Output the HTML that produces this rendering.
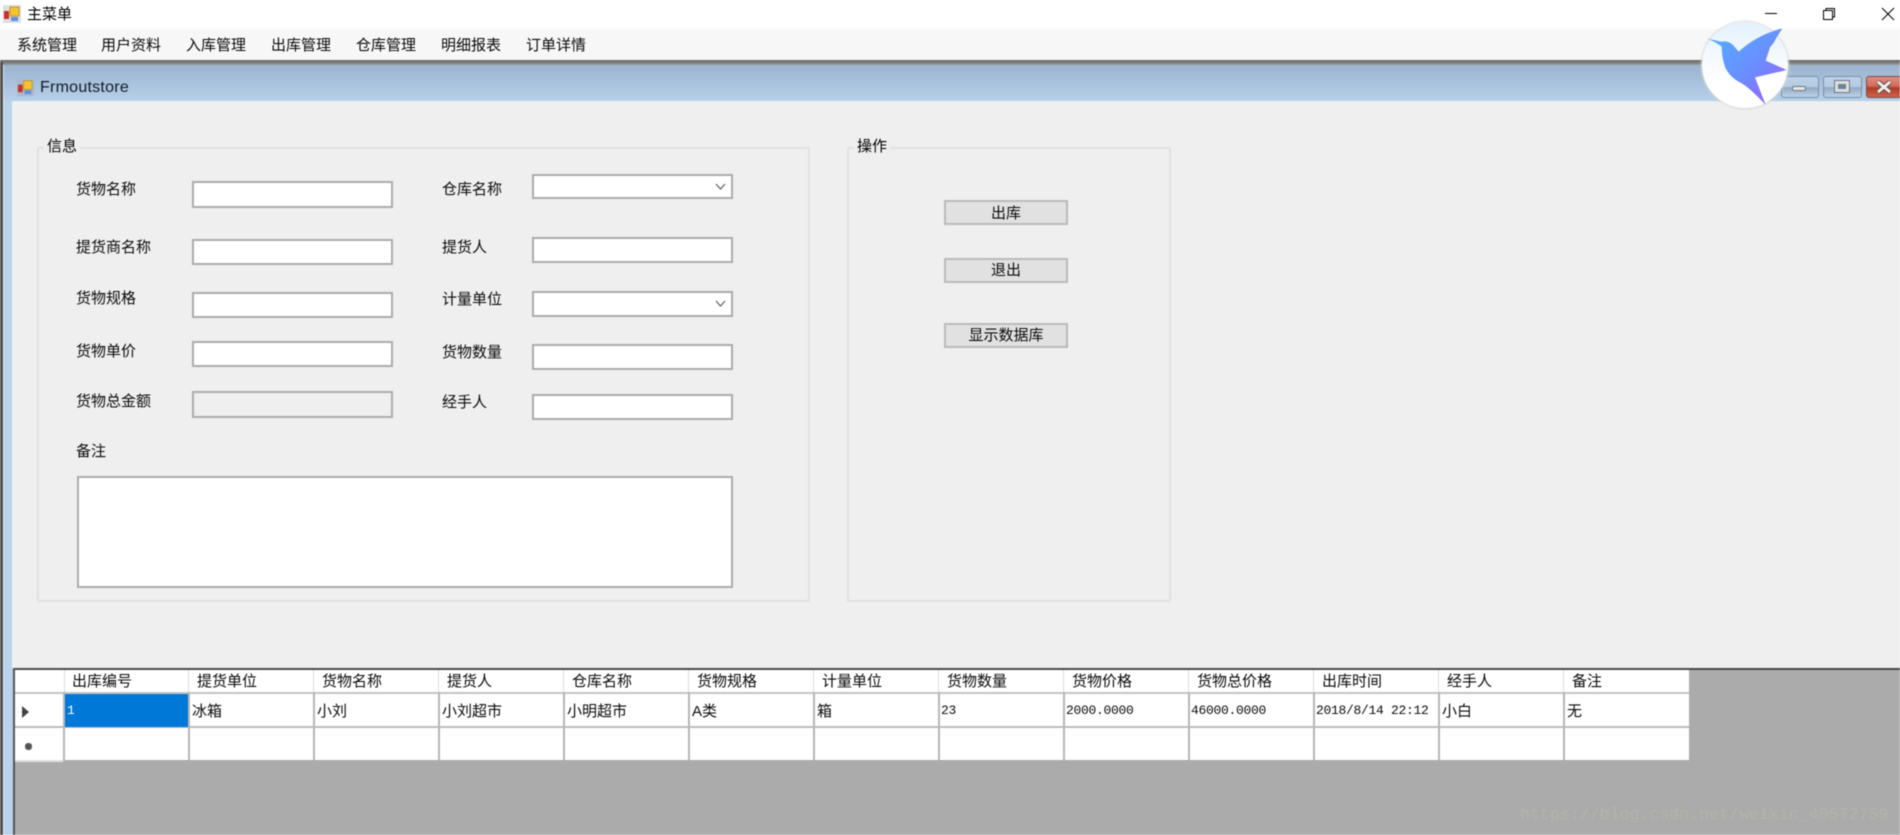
<!DOCTYPE html>
<html lang="zh-CN">
<head>
<meta charset="utf-8">
<title>主菜单</title>
<style>
html,body{margin:0;padding:0;width:1900px;height:835px;overflow:hidden;background:#fff}
#r{position:relative;width:1900px;height:835px;overflow:hidden;background:#fff;filter:blur(.45px);font-family:"Liberation Sans","Noto Sans CJK SC",sans-serif;font-size:15px;color:#0a0a0a}
#r div,#r svg{position:absolute}
.t{height:20px;line-height:20px;white-space:nowrap}
.m{font-family:"Liberation Mono","Noto Sans CJK SC",monospace;font-size:13px;letter-spacing:-.3px}
.i{background:#fff;border:2px solid #ababab;box-sizing:border-box}
.b{background:#e1e1e1;border:2px solid #bababa;box-sizing:border-box;left:944px;width:124px;height:25px;text-align:center;line-height:22px}
.g{border:2px solid #e2e2e2;box-sizing:border-box;top:147px;height:455px}
.v{width:2px;top:692px;height:68px;background:#b6b6b6}
.h{width:1px;top:670px;height:23px;background:#dcdcdc}
.wb{top:76px;height:22px;border:1px solid #7b8ea5;border-radius:3px;box-sizing:border-box;background:linear-gradient(#bdd2e8 0,#b5cbe3 50%,#93a9c0 52%,#bcd2e8 100%)}
</style>
</head>
<body>
<div id="r">
<!-- top bar -->
<div style="left:0;top:29px;width:1900px;height:31px;background:#f7f7f7"></div>
<svg style="left:3px;top:5px" width="18" height="18" viewBox="0 0 18 18"><rect width="18" height="18" fill="#ddd"/><rect x="1" y="6" width="5" height="8" fill="#c9302c"/><rect x="7" y="2" width="9" height="9" fill="#f3c42f" stroke="#c8962a"/><rect x="8" y="12" width="7" height="4" fill="#5b8fe0"/></svg>
<div class="t" style="left:27px;top:5px;color:#000">主菜单</div>
<div style="left:1765px;top:13px;width:12px;height:1px;background:#000"></div>
<svg style="left:1822px;top:7px" width="14" height="14" viewBox="0 0 14 14" fill="none" stroke="#000"><rect x="1.5" y="3.5" width="9" height="9"/><path d="M4 3.5V1.5H12.5V10H10.5"/></svg>
<svg style="left:1881px;top:7px" width="14" height="14" viewBox="0 0 14 14" fill="none" stroke="#000"><path d="M1 1L13 13M13 1L1 13"/></svg>
<div class="t" style="left:17px;top:36px">系统管理</div>
<div class="t" style="left:101px;top:36px">用户资料</div>
<div class="t" style="left:186px;top:36px">入库管理</div>
<div class="t" style="left:271px;top:36px">出库管理</div>
<div class="t" style="left:356px;top:36px">仓库管理</div>
<div class="t" style="left:441px;top:36px">明细报表</div>
<div class="t" style="left:526px;top:36px">订单详情</div>

<!-- MDI child window frame -->
<div style="left:0;top:60px;width:1900px;height:5px;background:linear-gradient(#666,#777 40%,#9c9c9c)"></div>
<div style="left:0;top:62px;width:3px;height:773px;background:#4f4f4f"></div>
<div style="left:3px;top:65px;width:1px;height:770px;background:#e8e8e8"></div>
<div style="left:4px;top:65px;width:9px;height:770px;background:#bad3ec"></div>
<div style="left:4px;top:65px;width:1896px;height:36px;background:linear-gradient(#9ab3cf,#b7d0ea)"></div>
<div style="left:12px;top:101px;width:1888px;height:567px;background:#efefef"></div>
<svg style="left:17px;top:79px" width="17" height="17" viewBox="0 0 18 18"><rect width="18" height="18" fill="#a9b9cb"/><rect x="1" y="6" width="5" height="8" fill="#c9302c"/><rect x="7" y="2" width="9" height="9" fill="#f3c42f" stroke="#c8962a"/><rect x="8" y="12" width="7" height="4" fill="#5b8fe0"/></svg>
<div class="t" style="left:40px;top:78px;font-size:16px;letter-spacing:.25px;color:#121a26">Frmoutstore</div>
<!-- window buttons -->
<div class="wb" style="left:1781px;width:38px"></div>
<div style="left:1792px;top:86px;width:14px;height:5px;background:#e8e8e8;border:1px solid #6a7686;box-sizing:border-box;border-radius:2px"></div>
<div class="wb" style="left:1823px;width:39px"></div>
<div style="left:1835px;top:81px;width:14px;height:11px;border:3px solid #dedede;outline:1px solid #6a7686;box-sizing:border-box;background:#6f8099"></div>
<div class="wb" style="left:1866px;width:36px;background:linear-gradient(#dd8d80 0,#cf6d5e 45%,#b43a24 55%,#c9654f 100%);border-color:#7e4a44"></div>
<svg style="left:1875px;top:80px" width="18" height="14" viewBox="0 0 18 14"><path d="M3 2L15 12M15 2L3 12" stroke="#5a4a48" stroke-width="5"/><path d="M3 2L15 12M15 2L3 12" stroke="#f2ecea" stroke-width="3"/></svg>

<!-- group 信息 -->
<div class="g" style="left:37px;width:773px"></div>
<div class="t" style="left:44px;top:137px;background:#efefef;padding:0 3px;color:#000;height:19px">信息</div>
<div class="t" style="left:76px;top:180px">货物名称</div>
<div class="i" style="left:192px;top:181px;width:201px;height:27px"></div>
<div class="t" style="left:76px;top:238px">提货商名称</div>
<div class="i" style="left:192px;top:239px;width:201px;height:26px"></div>
<div class="t" style="left:76px;top:289px">货物规格</div>
<div class="i" style="left:192px;top:292px;width:201px;height:26px"></div>
<div class="t" style="left:76px;top:342px">货物单价</div>
<div class="i" style="left:192px;top:341px;width:201px;height:26px"></div>
<div class="t" style="left:76px;top:392px">货物总金额</div>
<div class="i" style="left:192px;top:391px;width:201px;height:27px;background:#efefef"></div>
<div class="t" style="left:76px;top:442px">备注</div>
<div class="i" style="left:77px;top:476px;width:656px;height:112px"></div>

<div class="t" style="left:442px;top:180px">仓库名称</div>
<div class="i" style="left:532px;top:174px;width:201px;height:25px"></div>
<svg style="left:715px;top:182px" width="11" height="9" viewBox="0 0 11 9" fill="none" stroke="#666" stroke-width="1.3"><path d="M1 2L5.5 7L10 2"/></svg>
<div class="t" style="left:442px;top:238px">提货人</div>
<div class="i" style="left:532px;top:237px;width:201px;height:26px"></div>
<div class="t" style="left:442px;top:290px">计量单位</div>
<div class="i" style="left:532px;top:291px;width:201px;height:26px"></div>
<svg style="left:715px;top:299px" width="11" height="9" viewBox="0 0 11 9" fill="none" stroke="#666" stroke-width="1.3"><path d="M1 2L5.5 7L10 2"/></svg>
<div class="t" style="left:442px;top:343px">货物数量</div>
<div class="i" style="left:532px;top:344px;width:201px;height:26px"></div>
<div class="t" style="left:442px;top:393px">经手人</div>
<div class="i" style="left:532px;top:394px;width:201px;height:26px"></div>

<!-- group 操作 -->
<div class="g" style="left:847px;width:324px"></div>
<div class="t" style="left:854px;top:137px;background:#efefef;padding:0 3px;color:#000;height:19px">操作</div>
<div class="b" style="top:200px;line-height:23px">出库</div>
<div class="b" style="top:258px">退出</div>
<div class="b" style="top:323px">显示数据库</div>

<!-- data grid -->
<div style="left:13px;top:668px;width:1887px;height:167px;background:#ababab"></div>
<div style="left:13px;top:668px;width:1887px;height:2px;background:#4a4a4a"></div>
<div style="left:13px;top:668px;width:2px;height:167px;background:#555"></div>
<div style="left:15px;top:670px;width:1674px;height:90px;background:#fff"></div>
<div style="left:15px;top:692px;width:1674px;height:2px;background:#c4c4c4"></div>
<div style="left:15px;top:726px;width:1674px;height:2px;background:#bcbcbc"></div>
<div style="left:15px;top:760px;width:49px;height:2px;background:#e0e0e0"></div>
<div style="left:64px;top:694px;width:124px;height:33px;background:#0078d7"></div>
<div class="h" style="left:64px"></div><div class="h" style="left:188px"></div><div class="h" style="left:313px"></div><div class="h" style="left:438px"></div><div class="h" style="left:563px"></div><div class="h" style="left:688px"></div><div class="h" style="left:813px"></div><div class="h" style="left:938px"></div><div class="h" style="left:1063px"></div><div class="h" style="left:1188px"></div><div class="h" style="left:1313px"></div><div class="h" style="left:1438px"></div><div class="h" style="left:1563px"></div>
<div class="v" style="left:63px;height:70px"></div><div class="v" style="left:188px"></div><div class="v" style="left:313px"></div><div class="v" style="left:438px"></div><div class="v" style="left:563px"></div><div class="v" style="left:688px"></div><div class="v" style="left:813px"></div><div class="v" style="left:938px"></div><div class="v" style="left:1063px"></div><div class="v" style="left:1188px"></div><div class="v" style="left:1313px"></div><div class="v" style="left:1438px"></div><div class="v" style="left:1563px"></div>

<div class="t" style="left:72px;top:672px">出库编号</div>
<div class="t" style="left:197px;top:672px">提货单位</div>
<div class="t" style="left:322px;top:672px">货物名称</div>
<div class="t" style="left:447px;top:672px">提货人</div>
<div class="t" style="left:572px;top:672px">仓库名称</div>
<div class="t" style="left:697px;top:672px">货物规格</div>
<div class="t" style="left:822px;top:672px">计量单位</div>
<div class="t" style="left:947px;top:672px">货物数量</div>
<div class="t" style="left:1072px;top:672px">货物价格</div>
<div class="t" style="left:1197px;top:672px">货物总价格</div>
<div class="t" style="left:1322px;top:672px">出库时间</div>
<div class="t" style="left:1447px;top:672px">经手人</div>
<div class="t" style="left:1572px;top:672px">备注</div>

<svg style="left:22px;top:706px" width="8" height="12" viewBox="0 0 8 12"><path d="M0 0L7 6L0 12Z" fill="#444"/></svg>
<div style="left:25px;top:743px;width:7px;height:7px;background:#555;border-radius:3px"></div>
<div class="t m" style="left:67px;top:701px;color:#fff">1</div>
<div class="t" style="left:192px;top:702px">冰箱</div>
<div class="t" style="left:317px;top:702px">小刘</div>
<div class="t" style="left:442px;top:702px">小刘超市</div>
<div class="t" style="left:567px;top:702px">小明超市</div>
<div class="t" style="left:692px;top:702px">A类</div>
<div class="t" style="left:817px;top:702px">箱</div>
<div class="t m" style="left:941px;top:701px">23</div>
<div class="t m" style="left:1066px;top:701px">2000.0000</div>
<div class="t m" style="left:1191px;top:701px">46000.0000</div>
<div class="t m" style="left:1316px;top:701px">2018/8/14 22:12</div>
<div class="t" style="left:1442px;top:702px">小白</div>
<div class="t" style="left:1567px;top:702px">无</div>

<div class="t" style="left:1520px;top:805px;font-family:'Liberation Mono',monospace;font-size:16.6px;color:#b3b3ac">https://blog.csdn.net/weixin_40572759</div>

<!-- floating bird badge -->
<div style="left:1702px;top:22px;width:86px;height:86px;border-radius:50%;background:linear-gradient(#e4f2fd,#ffffff 70%);box-shadow:0 0 2px 1px #d8d8d8"></div>
<svg style="left:1600px;top:0" width="300" height="130" viewBox="0 0 900 390">
<defs><linearGradient id="bd" x1="0" y1=".1" x2=".85" y2="1"><stop offset="0" stop-color="#52aeff"/><stop offset=".55" stop-color="#6a8eff"/><stop offset="1" stop-color="#9a60ff"/></linearGradient></defs>
<path d="M320 115L362 125Q385 121 398 134L416 155Q470 105 547 85L530 112L520 130L510 142L497 182L560 210L465 232L497 315C470 285 445 262 425 250C395 235 378 215 372 190C366 170 366 155 365 140C350 128 335 121 320 115Z" fill="url(#bd)"/>
</svg>
</div>
</body>
</html>
